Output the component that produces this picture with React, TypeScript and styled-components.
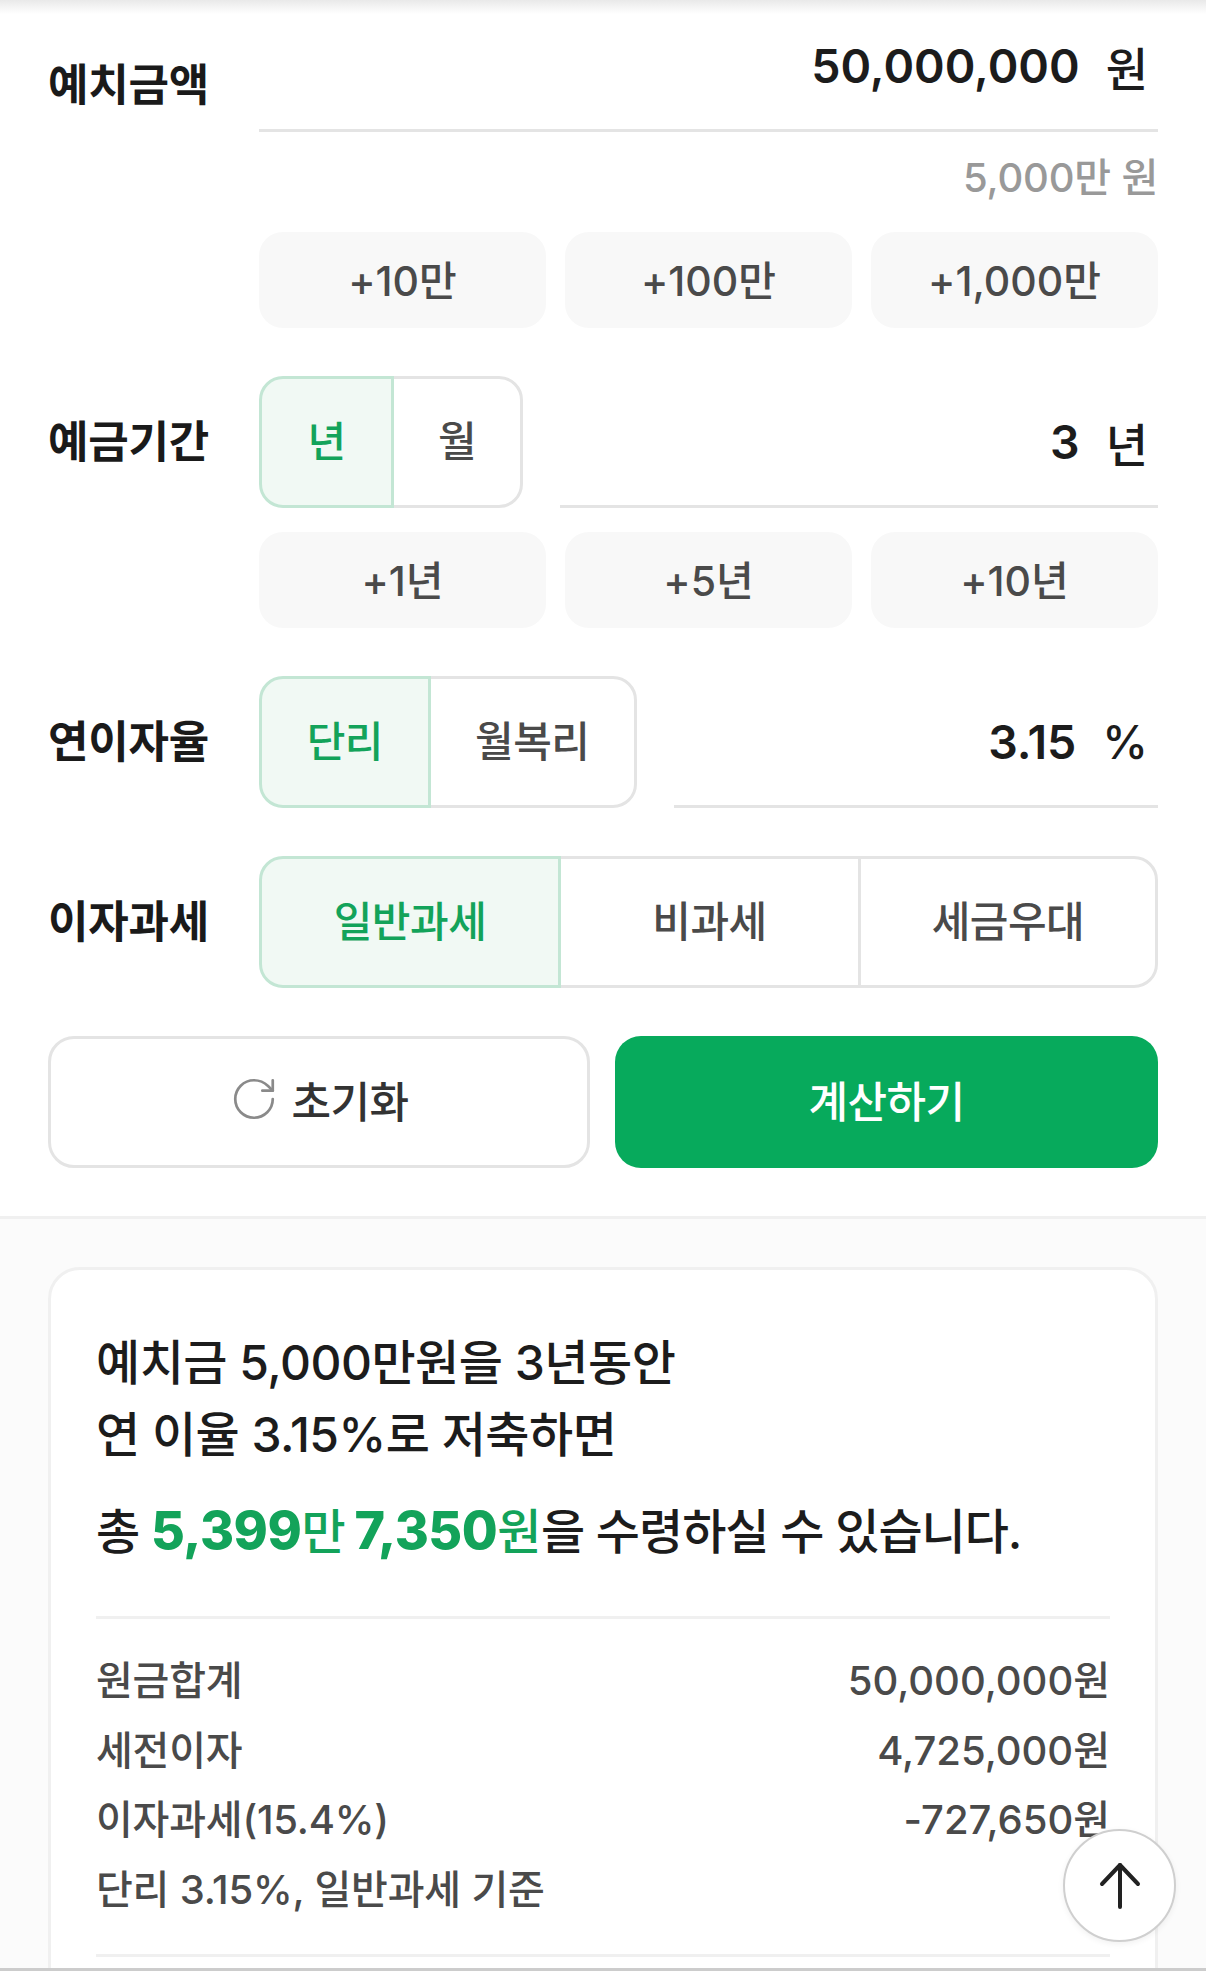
import React from "react";
import styled, { createGlobalStyle } from "styled-components";
import { RotateCw } from "lucide-react";

const GlobalStyle = createGlobalStyle`
  html, body {
    margin: 0;
    padding: 0;
    background: #ffffff;
  }
  body {
    font-family: Inter, "Noto Sans CJK KR", "Noto Sans", sans-serif;
    overflow: hidden;
  }
  * {
    box-sizing: border-box;
  }
`;

const amountButtons = ["+10만", "+100만", "+1,000만"];
const periodButtons = ["+1년", "+5년", "+10년"];

const summaryRows = [
  ["원금합계", "50,000,000원"],
  ["세전이자", "4,725,000원"],
  ["이자과세(15.4%)", "-727,650원"],
];

const App = () => {
  return (
    <Page>
      <GlobalStyle />
      <TopShade />
      <Form>
        <FieldRow>
          <FieldLabel $offset={55}>예치금액</FieldLabel>
          <FieldBody>
            <ValueInput>
              <span>50,000,000</span>
              <Unit>원</Unit>
            </ValueInput>
            <Helper>5,000만 원</Helper>
            <QuickRow>
              {amountButtons.map((item) => (
                <QuickButton key={item}>{item}</QuickButton>
              ))}
            </QuickRow>
          </FieldBody>
        </FieldRow>

        <FieldRow>
          <FieldLabel $offset={36}>예금기간</FieldLabel>
          <FieldBody>
            <ControlRow>
              <SegGroup $width={264}>
                <SegOption $active $grow={135}>년</SegOption>
                <SegOption $grow={132}>월</SegOption>
              </SegGroup>
              <ValueInput>
                <span>3</span>
                <Unit>년</Unit>
              </ValueInput>
            </ControlRow>
            <QuickRow $tight>
              {periodButtons.map((item) => (
                <QuickButton key={item}>{item}</QuickButton>
              ))}
            </QuickRow>
          </FieldBody>
        </FieldRow>

        <FieldRow>
          <FieldLabel $offset={36}>연이자율</FieldLabel>
          <FieldBody>
            <ControlRow>
              <SegGroup $width={378}>
                <SegOption $active $grow={171}>단리</SegOption>
                <SegOption $grow={210}>월복리</SegOption>
              </SegGroup>
              <ValueInput>
                <span>3.15</span>
                <Unit>%</Unit>
              </ValueInput>
            </ControlRow>
          </FieldBody>
        </FieldRow>

        <FieldRow>
          <FieldLabel $offset={36}>이자과세</FieldLabel>
          <FieldBody>
            <ControlRow>
              <SegGroup>
                <SegOption $active $grow={302}>일반과세</SegOption>
                <SegOption $grow={303}>비과세</SegOption>
                <SegOption $grow={300}>세금우대</SegOption>
              </SegGroup>
            </ControlRow>
          </FieldBody>
        </FieldRow>

        <ActionRow>
          <ResetButton>
            <RotateCw size={50} strokeWidth={1.3} color="#8a8a8a" />
            초기화
          </ResetButton>
          <SubmitButton>계산하기</SubmitButton>
        </ActionRow>
      </Form>

      <ResultSection>
        <ResultCard>
          <Headline>예치금 5,000만원을 3년동안</Headline>
          <Headline>연 이율 3.15%로 저축하면</Headline>
          <Total>
            총{" "}
            <Highlight>
              <b>5,399</b>만 <b>7,350</b>원
            </Highlight>
            을 수령하실 수 있습니다.
          </Total>
          <SummaryList>
            {summaryRows.map(([name, value]) => (
              <SummaryRow key={name}>
                <span>{name}</span>
                <SummaryValue>{value}</SummaryValue>
              </SummaryRow>
            ))}
            <SummaryRow>
              <span>단리 3.15%, 일반과세 기준</span>
            </SummaryRow>
          </SummaryList>
        </ResultCard>
      </ResultSection>

      <ScrollTop>
        <svg width="44" height="50" viewBox="0 0 44 50" fill="none" stroke="#222222" strokeWidth="4" strokeLinecap="round" strokeLinejoin="round">
          <path d="M4 23 L22 4 L40 23" />
          <path d="M22 4 V46" />
        </svg>
      </ScrollTop>
    </Page>
  );
};

export default App;

const Page = styled.div`
  position: relative;
  width: 1206px;
  height: 1978px;
  overflow: hidden;
  display: flex;
  flex-direction: column;
  padding-bottom: 7px;
  background: #ffffff;
`;

const TopShade = styled.div`
  position: absolute;
  top: 0;
  left: 0;
  right: 0;
  height: 14px;
  background: linear-gradient(#e9e9e9, #ffffff);
`;

const Form = styled.div`
  flex: none;
  display: flex;
  flex-direction: column;
  gap: 48px;
  padding: 0 48px 48px;
  border-bottom: 3px solid #f0f0f0;
`;

const FieldRow = styled.div`
  display: grid;
  grid-template-columns: 211px 1fr;
`;

const FieldLabel = styled.div<{ $offset: number }>`
  padding-top: ${(p) => p.$offset}px;
  font-size: 44px;
  line-height: 60px;
  font-weight: 700;
  letter-spacing: -0.2px;
  color: #1a1a1a;
`;

const FieldBody = styled.div`
  display: flex;
  flex-direction: column;
  min-width: 0;
`;

const ControlRow = styled.div`
  display: flex;
  gap: 37px;
`;

const ValueInput = styled.div`
  flex: 1 0 auto;
  height: 132px;
  display: flex;
  align-items: center;
  justify-content: flex-end;
  gap: 26px;
  padding: 3px 10px 0 0;
  border-bottom: 3px solid #e4e4e4;
  font-size: 46.5px;
  font-weight: 600;
  color: #1c1c1c;
`;

const Unit = styled.span`
  font-size: 46px;
  font-weight: 500;
`;

const Helper = styled.div`
  margin-top: 24px;
  text-align: right;
  font-size: 40px;
  line-height: 44px;
  font-weight: 500;
  letter-spacing: -0.2px;
  color: #999999;
`;

const QuickRow = styled.div<{ $tight?: boolean }>`
  display: grid;
  grid-template-columns: repeat(3, 1fr);
  gap: 19px;
  margin-top: ${(p) => (p.$tight ? 24 : 32)}px;
`;

const QuickButton = styled.button`
  height: 96px;
  padding: 0 0 5px;
  border: none;
  border-radius: 24px;
  background: #f8f8f8;
  font-family: inherit;
  font-size: 41px;
  font-weight: 500;
  color: #4a4a4a;
`;

const SegGroup = styled.div<{ $width?: number }>`
  display: flex;
  flex: ${(p) => (p.$width ? `0 0 ${p.$width}px` : "1")};
  height: 132px;
`;

const SegOption = styled.div<{ $active?: boolean; $grow: number }>`
  flex: ${(p) => p.$grow} 1 0;
  display: flex;
  align-items: center;
  justify-content: center;
  position: relative;
  z-index: ${(p) => (p.$active ? 1 : 0)};
  margin-left: -3px;
  padding-bottom: 7px;
  border: 3px solid ${(p) => (p.$active ? "#c3e6d4" : "#e4e4e4")};
  background: ${(p) => (p.$active ? "#f1f9f4" : "#ffffff")};
  color: ${(p) => (p.$active ? "#13a35a" : "#4a4a4a")};
  font-size: 42px;
  font-weight: 500;
  letter-spacing: -0.5px;

  &:first-child {
    margin-left: 0;
    border-radius: 24px 0 0 24px;
  }
  &:last-child {
    border-radius: 0 24px 24px 0;
  }
`;

const ActionRow = styled.div`
  display: grid;
  grid-template-columns: 542px 543px;
  gap: 25px;
`;

const ResetButton = styled.button`
  height: 132px;
  display: flex;
  align-items: center;
  justify-content: center;
  gap: 12px;
  padding: 0 0 7px;
  border: 3px solid #e4e4e4;
  border-radius: 26px;
  background: #ffffff;
  font-family: inherit;
  font-size: 43px;
  font-weight: 500;
  letter-spacing: -0.5px;
  color: #333333;
`;

const SubmitButton = styled.button`
  height: 132px;
  padding: 0 0 7px;
  border: none;
  border-radius: 26px;
  background: #07aa5c;
  font-family: inherit;
  font-size: 43px;
  font-weight: 500;
  letter-spacing: -0.5px;
  color: #ffffff;
`;

const ResultSection = styled.div`
  flex: 1;
  min-height: 0;
  overflow: hidden;
  padding: 48px 48px 0;
  background: #fbfbfb;
  border-bottom: 3px solid #cccccc;
`;

const ResultCard = styled.div`
  height: 800px;
  padding: 57px 45px 0;
  border: 3px solid #f0f0f0;
  border-radius: 32px;
  background: #ffffff;
`;

const Headline = styled.div`
  font-size: 48px;
  line-height: 72px;
  font-weight: 500;
  letter-spacing: -0.5px;
  color: #1c1c1c;
`;

const Total = styled(Headline)`
  margin-top: 24px;
  padding-bottom: 48px;
  border-bottom: 3px solid #f0f0f0;
  letter-spacing: -1px;
`;

const Highlight = styled.span`
  color: #13a35a;
  font-size: 48px;
  letter-spacing: -0.5px;
  word-spacing: -3px;

  b {
    font-size: 52px;
    font-weight: 800;
  }
`;

const SummaryList = styled.div`
  padding: 27px 0 30px;
  border-bottom: 3px solid #f0f0f0;
`;

const SummaryRow = styled.div`
  display: flex;
  justify-content: space-between;
  font-size: 40px;
  line-height: 69.5px;
  font-weight: 500;
  letter-spacing: -0.2px;
  color: #4a4a4a;
`;

const SummaryValue = styled.span`
  letter-spacing: 0;
`;

const ScrollTop = styled.div`
  position: absolute;
  top: 1829px;
  left: 1063px;
  width: 113px;
  height: 113px;
  display: flex;
  align-items: center;
  justify-content: center;
  border: 2px solid #cfcfcf;
  border-radius: 50%;
  background: #ffffff;
  box-shadow: 0 2px 6px rgba(0, 0, 0, 0.06);
`;
